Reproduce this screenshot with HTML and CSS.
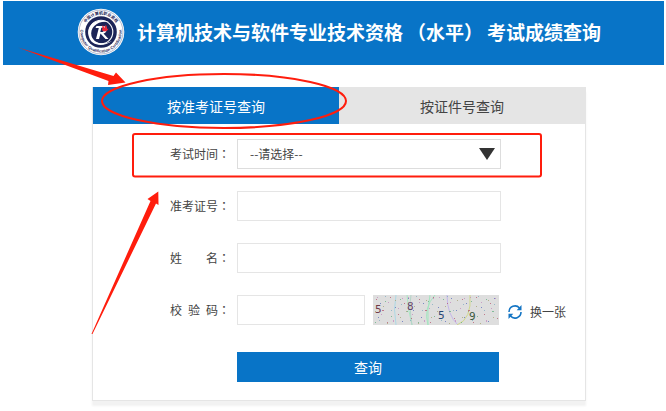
FILE: index.html
```html
<!DOCTYPE html>
<html lang="zh-CN">
<head>
<meta charset="utf-8">
<meta name="viewport" content="width=device-width, initial-scale=1">
<title>计算机技术与软件专业技术资格（水平）考试成绩查询</title>
<link rel="stylesheet" href="styles.css">
</head>
<body>
<header class="banner">
  <svg class="logo" viewBox="0 0 48 48" aria-hidden="true">
    <defs>
      <path id="ring-top" d="M6.5 24a17.5 17.5 0 0 1 35 0"/>
      <path id="ring-bottom" d="M4.6 17a20.6 20.6 0 1 0 38.8 0"/>
    </defs>
    <circle cx="24" cy="24" r="23.3" fill="#fff"/>
    <circle cx="24" cy="24" r="22" fill="none" stroke="#6a769c" stroke-width=".5"/>
    <circle cx="24" cy="24" r="15.8" fill="#1c2457"/>
    <circle cx="24" cy="24" r="11.800" fill="none" stroke="#fff" stroke-width="1.100"/>
    <path d="M12 29C8 18 19 9 32 14C21 12 12.500 19 14.500 28C17 35 25 38 35 33C25 40 14 37 12 29Z" fill="#fff"/>
    <path fill="#fff" fill-rule="evenodd" d="M19.500 18H26C30.500 18 31 24.500 26.500 25.500L31.500 31H28.500L23.500 25.500L22 31H19L21.800 20H18.500ZM24.300 19.800L23.300 24H25.500C27.800 23.500 27.800 20 25.800 19.800Z"/>
    <path fill="#ec2436" d="M25 22C26 20.500 24.500 18.500 26 17C26 18.500 27.500 18.500 27.500 20C28.500 19 28 18 29 16.500C29 18.500 31 19 29.500 21L31.500 20.500C30.500 23.500 27 24.500 25 22Z"/>
    <text class="ring-cn"><textPath href="#ring-top" startOffset="50%">中国计算机职业资格</textPath></text>
    <text class="ring-en"><textPath href="#ring-bottom" startOffset="50%">Computer Qualification Certification</textPath></text>
  </svg>
  <h1 class="title">计算机技术与软件专业技术资格<span class="level">（水平）</span>考试成绩查询</h1>
</header>

<main class="page">
  <section class="panel">
    <nav class="tabs">
      <button class="tab tab-active" type="button">按准考证号查询</button>
      <button class="tab" type="button">按证件号查询</button>
    </nav>
    <form class="form">
      <label class="label" for="exam"><span class="name">考试时间</span><span class="colon">：</span></label>
      <div class="field picker">
        <select class="control select" id="exam"><option>--请选择--</option></select>
        <svg class="caret" viewBox="0 0 16 12" aria-hidden="true"><path d="M0 0H16L8 12Z" fill="#333"/></svg>
      </div>

      <label class="label" for="ticket"><span class="name">准考证号</span><span class="colon">：</span></label>
      <div class="field"><input class="control" id="ticket" type="text"></div>

      <label class="label" for="person"><span class="name">姓 名</span><span class="colon">：</span></label>
      <div class="field"><input class="control" id="person" type="text"></div>

      <label class="label" for="code"><span class="name">校 验 码</span><span class="colon">：</span></label>
      <div class="field code-row">
        <input class="control code" id="code" type="text">
        <svg class="captcha" viewBox="0 0 126 30" role="img" aria-label="5859">
          <defs>
            <pattern id="dots-a" width="43" height="37" patternUnits="userSpaceOnUse">
              <path fill="#b44f68" d="M3 4h1v1h-1zM17 2h1v1h-1zM31 8h1v1h-1zM9 15h2v1h-2zM25 19h1v1h-1zM38 23h1v1h-1zM14 27h1v1h-1z"/>
              <path fill="#5265ba" d="M7 8h1v1h-1zM22 12h1v1h-1zM35 3h1v1h-1zM5 22h1v1h-1zM29 26h1v1h-1zM40 15h1v1h-1z"/>
              <path fill="#5aad7b" d="M12 6h1v1h-1zM27 4h1v1h-1zM18 21h1v1h-1zM33 16h2v1h-2zM2 27h1v1h-1z"/>
            </pattern>
            <pattern id="dots-b" width="31" height="41" patternUnits="userSpaceOnUse">
              <path fill="#c283bd" d="M4 2h1v1h-1zM15 7h1v1h-1zM25 13h1v1h-1zM8 19h1v1h-1zM20 25h1v2h-1zM29 3h1v1h-1z"/>
              <path fill="#a39f6a" d="M10 11h1v1h-1zM2 16h1v1h-1zM22 5h1v1h-1zM14 28h1v1h-1zM27 22h1v1h-1z"/>
              <path fill="#79a9bf" d="M6 25h1v1h-1zM18 15h1v1h-1zM12 1h1v1h-1zM28 9h1v1h-1z"/>
            </pattern>
          </defs>
          <rect width="126" height="30" fill="#dedede"/>
          <g fill="none">
            <path d="M23 0Q20 14 23 30" stroke="#add8e5"/>
            <path d="M34 0Q35 15 39 30" stroke="#a9e8c4"/>
            <path d="M38 0Q36 12 39 30" stroke="#b5d4c8"/>
            <path d="M62 0Q50 13 55 30M57 0Q54 14 55 30" stroke="#a4e5c0"/>
            <path d="M74 0Q74 20 85 30" stroke="#c5b6eb"/>
            <path d="M97 0Q99 24 84 30" stroke="#d0d98b"/>
          </g>
          <g opacity=".7">
            <rect width="126" height="30" fill="url(#dots-a)"/>
            <rect width="126" height="30" fill="url(#dots-b)"/>
          </g>
          <g class="digits">
            <text x="2" y="18" fill="#713c48">5</text>
            <text x="34" y="15" fill="#684369">8</text>
            <text x="65" y="24" fill="#264773">5</text>
            <text x="96" y="25" fill="#3a5a41">9</text>
          </g>
        </svg>
        <button class="refresh" type="button">
          <svg class="refresh-icon" viewBox="0 0 14 14" aria-hidden="true">
            <path d="M1 7A6 6 0 0 1 11.500 3M13 7A6 6 0 0 1 2.500 11" fill="none" stroke="#1475c4" stroke-width="1.600"/>
            <path d="M13.500 0V5.300H8.700ZM.500 14V8.700H5.300Z" fill="#1475c4"/>
          </svg>
          <span>换一张</span>
        </button>
      </div>

      <button class="submit" type="submit">查询</button>
    </form>
  </section>
</main>

<svg class="marks" width="666" height="411" viewBox="0 0 666 411" aria-hidden="true">
  <g fill="none" stroke="#ff1d0d" stroke-width="2">
    <ellipse cx="224" cy="101" rx="122" ry="27"/>
    <rect x="133" y="134" width="408" height="42.500" rx="2"/>
  </g>
  <g fill="#ff1d0d">
    <path d="M18 47.500L113.500 76L116 72.500L125.500 82.500L108 85L108.500 81Z"/>
    <path d="M91.500 334L150.500 201L147.500 199L158.300 191.500L158.500 205L156 203.500L92.500 334Z"/>
  </g>
</svg>
</body>
</html>
```
FILE: styles.css
```css
* {
  box-sizing: border-box;
}

body {
  position: relative;
  margin: 0;
  padding: 1px 2px 0 3px;
  background: #fff;
  color: #444;
  font: 12px/20px "Noto Sans CJK SC", sans-serif;
}

button,
input,
select {
  margin: 0;
  border: 0;
  border-radius: 0;
  padding: 0;
  background: none;
  color: inherit;
  font: inherit;
}

.banner {
  display: flex;
  align-items: center;
  gap: 12px;
  height: 64px;
  padding-left: 74px;
  padding-bottom: 2px;
  background: #0874c7;
}

.logo {
  flex: none;
  width: 48px;
  height: 48px;
}

.ring-cn,
.ring-en {
  fill: #1c2457;
  font-weight: 700;
  text-anchor: middle;
}

.ring-cn {
  font-size: 4px;
}

.ring-en {
  font-family: "Liberation Sans", sans-serif;
  font-size: 4px;
}

.title {
  margin: 0;
  color: #fff;
  font-size: 19px;
  font-weight: 700;
  line-height: 28px;
  white-space: nowrap;
}

.level {
  margin: 0 4px;
  font-family: "Noto Sans CJK TC", sans-serif;
}

.page {
  padding: 22px 0 10px 11px;
}

.panel {
  max-width: 494px;
  margin: 0 auto;
  border: 1px solid #e5e5e5;
  border-top: 0;
  box-shadow: 0 5px 2px #f2f2f2;
}

.tabs {
  display: grid;
  grid-template-columns: 1fr 1fr;
}

.tab {
  height: 37px;
  background: #e5e5e5;
  font-size: 14px;
}

.tab-active {
  background: #0874c7;
  color: #fff;
}

.form {
  display: grid;
  grid-template-columns: 137px 264px;
  column-gap: 7px;
  row-gap: 22px;
  padding: 15px 0 18px;
}

.label {
  display: flex;
  align-items: center;
  justify-content: flex-end;
  height: 30px;
}

.name {
  width: 48px;
  text-align: justify;
  text-align-last: justify;
}

.colon {
  font-family: "Noto Sans CJK TC", sans-serif;
}

.colon:lang(zh) {
  font-feature-settings: normal;
}

.control {
  display: block;
  width: 100%;
  height: 30px;
  border: 1px solid #e5e5e5;
  padding: 0 12px;
  background: #fff;
}

.picker {
  display: grid;
  align-items: center;
}

.picker > * {
  grid-area: 1 / 1;
}

.select {
  appearance: none;
  border-color: #ddd;
}

.caret {
  justify-self: end;
  width: 16px;
  height: 12px;
  margin-right: 6px;
  pointer-events: none;
}

.code-row {
  display: flex;
  align-items: center;
}

.code {
  flex: none;
  width: 128px;
  margin-right: 8px;
}

.captcha {
  flex: none;
  width: 126px;
  height: 30px;
}

.digits {
  font: 11px "DejaVu Sans Mono", monospace;
}

.refresh {
  display: flex;
  flex: none;
  align-items: center;
  gap: 8px;
  height: 30px;
  margin-left: 9px;
  padding-top: 3px;
  white-space: nowrap;
}

.refresh-icon {
  width: 14px;
  height: 14px;
}

.submit {
  grid-column: 2;
  height: 30px;
  margin: 5px 2px 0 0;
  background: #0874c7;
  color: #fff;
  font-size: 14px;
}

.marks {
  position: absolute;
  top: 0;
  left: 0;
  pointer-events: none;
}
```
